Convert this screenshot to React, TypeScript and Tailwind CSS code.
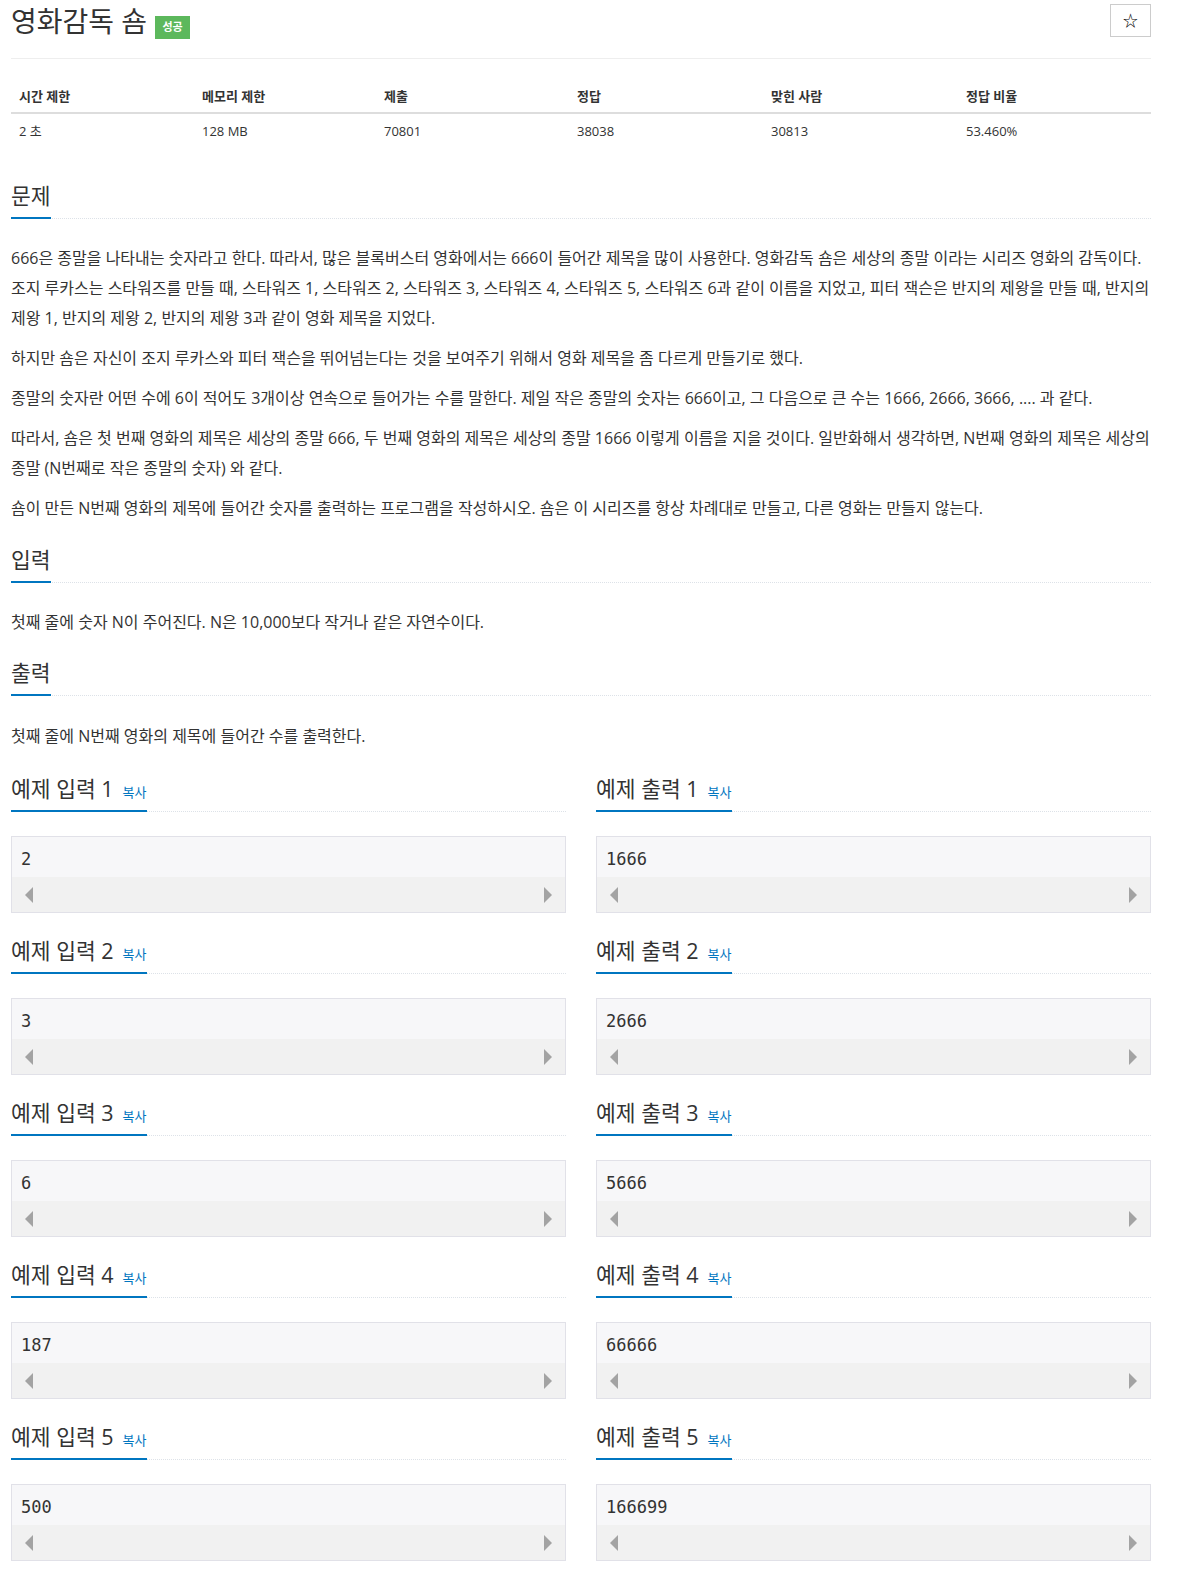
import React from "react";

const problem: string[][] = [
  [
    "666은 종말을 나타내는 숫자라고 한다. 따라서, 많은 블록버스터 영화에서는 666이 들어간 제목을 많이 사용한다. 영화감독 숌은 세상의 종말 이라는 시리즈 영화의 감독이다.",
    "조지 루카스는 스타워즈를 만들 때, 스타워즈 1, 스타워즈 2, 스타워즈 3, 스타워즈 4, 스타워즈 5, 스타워즈 6과 같이 이름을 지었고, 피터 잭슨은 반지의 제왕을 만들 때, 반지의",
    "제왕 1, 반지의 제왕 2, 반지의 제왕 3과 같이 영화 제목을 지었다.",
  ],
  ["하지만 숌은 자신이 조지 루카스와 피터 잭슨을 뛰어넘는다는 것을 보여주기 위해서 영화 제목을 좀 다르게 만들기로 했다."],
  ["종말의 숫자란 어떤 수에 6이 적어도 3개이상 연속으로 들어가는 수를 말한다. 제일 작은 종말의 숫자는 666이고, 그 다음으로 큰 수는 1666, 2666, 3666, .... 과 같다."],
  [
    "따라서, 숌은 첫 번째 영화의 제목은 세상의 종말 666, 두 번째 영화의 제목은 세상의 종말 1666 이렇게 이름을 지을 것이다. 일반화해서 생각하면, N번째 영화의 제목은 세상의",
    "종말 (N번째로 작은 종말의 숫자) 와 같다.",
  ],
  ["숌이 만든 N번째 영화의 제목에 들어간 숫자를 출력하는 프로그램을 작성하시오. 숌은 이 시리즈를 항상 차례대로 만들고, 다른 영화는 만들지 않는다."],
];

const samples = [
  { input: "2", output: "1666" },
  { input: "3", output: "2666" },
  { input: "6", output: "5666" },
  { input: "187", output: "66666" },
  { input: "500", output: "166699" },
];

const stats = [
  { label: "시간 제한", value: "2 초" },
  { label: "메모리 제한", value: "128 MB" },
  { label: "제출", value: "70801" },
  { label: "정답", value: "38038" },
  { label: "맞힌 사람", value: "30813" },
  { label: "정답 비율", value: "53.460%" },
];

const colWidths = [183, 182, 193, 194, 195, 193];

function Headline({ title, copy }: { title: string; copy?: boolean }) {
  return (
    <div className="border-b border-dotted border-[#dde2e8]">
      <h2 className="-mb-px inline-block border-b-2 border-[#0076c0] pb-[6px] text-[21.5px] font-normal leading-[30px] text-[#333]">
        {title}
        {copy && <span className="ml-[9px] text-[13px] leading-none text-[#0076c0]">복사</span>}
      </h2>
    </div>
  );
}

function Para({ lines }: { lines: string[] }) {
  return (
    <p className="whitespace-nowrap text-[16px] leading-[30px] text-[#333]">
      {lines.map((l, i) => (
        <React.Fragment key={i}>
          {i > 0 && <br />}
          {l}
        </React.Fragment>
      ))}
    </p>
  );
}

function SampleBox({ value }: { value: string }) {
  return (
    <div className="mt-[24px] border border-[#e1e1e8]">
      <div className="flex h-[40px] items-center bg-[#f7f7f9] pl-[9px] pt-[6px] font-['DejaVu_Sans_Mono',monospace] text-[17px] text-[#333]">
        {value}
      </div>
      <div className="flex h-[35px] items-center justify-between bg-[#f1f1f1] px-[13px]">
        <svg width="8" height="16" viewBox="0 0 8 16">
          <polygon points="8,0 0,8 8,16" fill="#a3a3a3" />
        </svg>
        <svg width="8" height="16" viewBox="0 0 8 16">
          <polygon points="0,0 8,8 0,16" fill="#a3a3a3" />
        </svg>
      </div>
    </div>
  );
}

export default function App() {
  return (
    <div className="min-h-screen bg-white font-['Open_Sans','Noto_Sans_CJK_KR',sans-serif] text-[#333]">
      <div className="ml-[11px] flex w-[1140px] flex-col">
        <div className="flex h-[59px] items-start border-b border-[#eee]">
          <h1 className="text-[28px] font-normal leading-[42px] text-[#333]">영화감독 숌</h1>
          <span className="ml-[8px] mt-[16px] flex h-[23px] w-[35px] items-center justify-center bg-[#5cb85c] text-[11px] font-bold text-white">
            성공
          </span>
          <button className="ml-auto mt-[4px] flex h-[33px] w-[41px] items-center justify-center border border-[#ccc] bg-white text-[15px] text-black">
            ☆
          </button>
        </div>

        <table className="mt-[20px] w-full table-fixed border-collapse">
          <colgroup>
            {colWidths.map((w, i) => (
              <col key={i} style={{ width: w }} />
            ))}
          </colgroup>
          <thead>
            <tr className="border-b-2 border-[#ddd]">
              {stats.map((s) => (
                <th key={s.label} className="pb-[6px] pl-[8px] pt-[7px] text-left text-[13px] font-bold leading-[20px] text-[#333]">
                  {s.label}
                </th>
              ))}
            </tr>
          </thead>
          <tbody>
            <tr>
              {stats.map((s) => (
                <td key={s.label} className="py-[7px] pl-[8px] text-[13px] leading-[20px] text-[#333]">
                  {s.value}
                </td>
              ))}
            </tr>
          </tbody>
        </table>

        <section className="mt-[33px]">
          <Headline title="문제" />
          <div className="mt-[24px] flex flex-col gap-[10px]">
            {problem.map((p, i) => (
              <Para key={i} lines={p} />
            ))}
          </div>
        </section>

        <section className="mt-[22px]">
          <Headline title="입력" />
          <div className="mt-[24px]">
            <Para lines={["첫째 줄에 숫자 N이 주어진다. N은 10,000보다 작거나 같은 자연수이다."]} />
          </div>
        </section>

        <section className="mt-[21px]">
          <Headline title="출력" />
          <div className="mt-[25px]">
            <Para lines={["첫째 줄에 N번째 영화의 제목에 들어간 수를 출력한다."]} />
          </div>
        </section>

        <div className="mt-[23px] flex flex-col gap-[23px]">
          {samples.map((s, i) => (
            <div key={i} className="grid grid-cols-2 gap-[30px]">
              <div>
                <Headline title={`예제 입력 ${i + 1}`} copy />
                <SampleBox value={s.input} />
              </div>
              <div>
                <Headline title={`예제 출력 ${i + 1}`} copy />
                <SampleBox value={s.output} />
              </div>
            </div>
          ))}
        </div>
      </div>
    </div>
  );
}
